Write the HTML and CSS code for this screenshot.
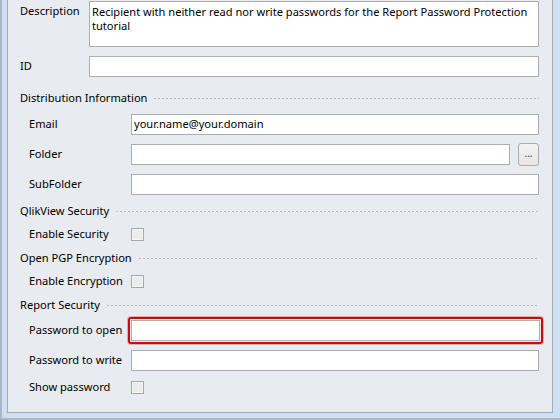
FILE: index.html
```html
<!DOCTYPE html>
<html>
<head>
<meta charset="utf-8">
<link rel="stylesheet" href="styles.css">
</head>
<body>
<div class="frame">
  <div class="panel">
    <div class="row row-desc">
      <span class="label main">Description</span>
      <div class="field textarea">Recipient with neither read nor write passwords for the Report Password Protection tutorial</div>
    </div>
    <div class="row row-id">
      <span class="label main">ID</span>
      <div class="field"></div>
    </div>

    <div class="section s-dist"><span>Distribution Information</span><i class="dash"></i></div>
    <div class="row sub r-email">
      <span class="label">Email</span>
      <div class="field">your.name@your.domain</div>
    </div>
    <div class="row sub r-folder">
      <span class="label">Folder</span>
      <div class="field"></div>
      <button class="browse">...</button>
    </div>
    <div class="row sub r-subfolder">
      <span class="label">SubFolder</span>
      <div class="field"></div>
    </div>

    <div class="section s-qv"><span>QlikView Security</span><i class="dash"></i></div>
    <div class="row sub check-row r-sec">
      <span class="label">Enable Security</span>
      <span class="checkbox"></span>
    </div>

    <div class="section s-pgp"><span>Open PGP Encryption</span><i class="dash"></i></div>
    <div class="row sub check-row r-enc">
      <span class="label">Enable Encryption</span>
      <span class="checkbox"></span>
    </div>

    <div class="section s-rep"><span>Report Security</span><i class="dash"></i></div>
    <div class="row sub r-pwopen">
      <span class="label">Password to open</span>
      <div class="focus-ring"><div class="field"></div></div>
    </div>
    <div class="row sub r-pwwrite">
      <span class="label">Password to write</span>
      <div class="field"></div>
    </div>
    <div class="row sub check-row r-show">
      <span class="label">Show password</span>
      <span class="checkbox"></span>
    </div>
  </div>
</div>
</body>
</html>
```

FILE: styles.css
```css
* { box-sizing: border-box; }
html, body {
  margin: 0;
  padding: 0;
  width: 560px;
  height: 420px;
  overflow: hidden;
}
body {
  font-family: "Noto Sans", "Open Sans", sans-serif;
  font-size: 11.1px;
  color: #000;
}
.frame {
  width: 560px;
  height: 420px;
  background: #cfe0f2;
  border-left: 2px solid #aab6c4;
  border-bottom: 2px solid #aab6c4;
  padding: 0 7px 5px 5px;
  display: flex;
}
.panel {
  flex: 1;
  background: #e8ebf0;
  border-left: 1px solid #a3acb8;
  border-right: 1px solid #a3acb8;
  border-bottom: 1px solid #a3acb8;
  padding: 1px 13px 0 12px;
  display: flex;
  flex-direction: column;
}
.row {
  display: flex;
  align-items: center;
  height: 21px;
  flex-shrink: 0;
}
.label {
  flex-shrink: 0;
  white-space: nowrap;
  line-height: 15px;
  margin-top: -2px;
}
.label.main { width: 69px; }
.row.sub { padding-left: 9px; }
.row.sub .label { width: 102px; }
.field {
  flex: 1;
  height: 21px;
  background: #fff;
  border: 1px solid #abadb3;
  padding: 0 1px 0 2px;
  line-height: 17px;
  white-space: nowrap;
  overflow: hidden;
  color: #000;
}
.row-desc {
  height: 46px;
  align-items: flex-start;
}
.row-desc .label { margin-top: 0; padding-top: 2px; }
.field.textarea {
  height: 46px;
  white-space: normal;
  line-height: 14px;
  padding: 3px 4px 0 2px;
}
.row-id { margin-top: 9px; }

.section {
  display: flex;
  align-items: center;
  height: 20px;
  flex-shrink: 0;
}
.section span { white-space: nowrap; line-height: 15px; margin-top: -2px; }
.dash {
  flex: 1;
  margin-left: 7px;
  margin-top: 1px;
  height: 1px;
  background: repeating-linear-gradient(90deg, #b7bcc4 0 2px, transparent 2px 4px);
}
.s-dist { margin-top: 11px; }
.r-email { margin-top: 6px; }
.r-folder { margin-top: 9px; }
.r-subfolder { margin-top: 9px; }
.s-qv { margin-top: 6px; }
.r-sec { margin-top: 3px; height: 20px; }
.s-pgp { margin-top: 4px; }
.r-enc { margin-top: 3px; height: 20px; }
.s-rep { margin-top: 4px; }
.r-pwopen { margin-top: 5px; }
.r-pwwrite { margin-top: 9px; }
.r-show { margin-top: 6px; height: 20px; }

.browse {
  flex-shrink: 0;
  width: 21px;
  height: 23px;
  margin-left: 8px;
  padding: 0 0 4px 0;
  border: 1px solid #acacac;
  border-radius: 3px;
  background: linear-gradient(#f3f3f3, #e6e6e6);
  font-family: "Noto Sans", sans-serif;
  font-size: 10px;
  line-height: 10px;
  color: #333;
}
.checkbox {
  width: 13px;
  height: 13px;
  border: 1px solid #a8a8a8;
  background: #ececec;
  box-shadow: inset 0 0 0 1px #f6f6f6;
  flex-shrink: 0;
}
.focus-ring {
  flex: 1;
  display: flex;
  margin: -4px -4px -3px -3px;
  padding: 1px;
  border: 2px solid #c40d0d;
  border-radius: 3px;
  box-shadow: 0 0 0 1px rgba(200, 60, 60, 0.35);
}
```
